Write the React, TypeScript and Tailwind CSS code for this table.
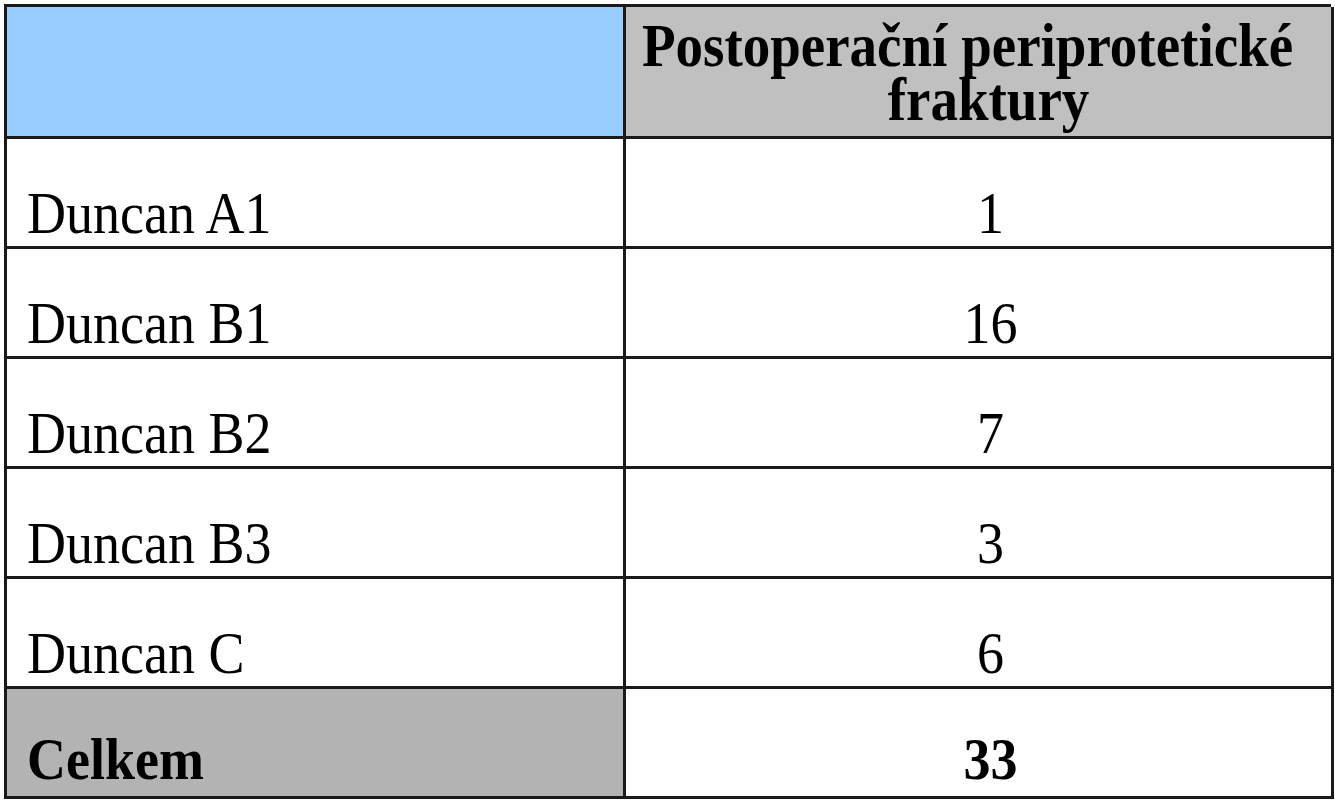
const rows = [
  { label: "Duncan A1", value: "1" },
  { label: "Duncan B1", value: "16" },
  { label: "Duncan B2", value: "7" },
  { label: "Duncan B3", value: "3" },
  { label: "Duncan C", value: "6" },
];

export default function App() {
  return (
    <div className="h-[800px] w-[1335px] bg-white pl-[4px] pt-[4px] font-['Liberation_Serif','Times_New_Roman',serif] text-black">
      <div className="grid w-[1327px] grid-cols-[619px_708px] border-l-[3px] border-t-[3px] border-[#1a1a1a]">
        <div className="h-[132px] border-b-[3px] border-r-[3px] border-[#1a1a1a] bg-[#99ccff]" />
        <div className="flex h-[132px] items-center justify-center border-b-[3px] border-r-[3px] border-[#1a1a1a] bg-[#c0c0c0] pr-[22px] pt-[2px]">
          <div className="scale-y-110 text-center text-[55px] font-bold leading-[49px]">
            <p>Postoperační periprotetické</p>
            <p className="pl-[42px]">fraktury</p>
          </div>
        </div>

        {rows.map((row) => (
          <Row key={row.label} label={row.label} value={row.value} />
        ))}

        <div className="flex h-[110px] items-end border-b-[3px] border-r-[3px] border-[#1a1a1a] bg-[#b3b3b3] pb-[10px] pl-[20px]">
          <span className="inline-block scale-y-110 text-[54px] font-bold leading-none">Celkem</span>
        </div>
        <div className="flex h-[110px] items-end justify-center border-b-[3px] border-r-[3px] border-[#1a1a1a] bg-white pb-[10px] pl-[24px]">
          <span className="inline-block scale-y-110 text-[54px] font-bold leading-none">33</span>
        </div>
      </div>
    </div>
  );
}

function Row({ label, value }: { label: string; value: string }) {
  return (
    <>
      <div className="flex h-[110px] items-end border-b-[3px] border-r-[3px] border-[#1a1a1a] bg-white pb-[6px] pl-[20px]">
        <span className="inline-block scale-y-110 text-[54px] leading-none">{label}</span>
      </div>
      <div className="flex h-[110px] items-end justify-center border-b-[3px] border-r-[3px] border-[#1a1a1a] bg-white pb-[6px] pl-[24px]">
        <span className="inline-block scale-y-110 text-[54px] leading-none">{value}</span>
      </div>
    </>
  );
}
